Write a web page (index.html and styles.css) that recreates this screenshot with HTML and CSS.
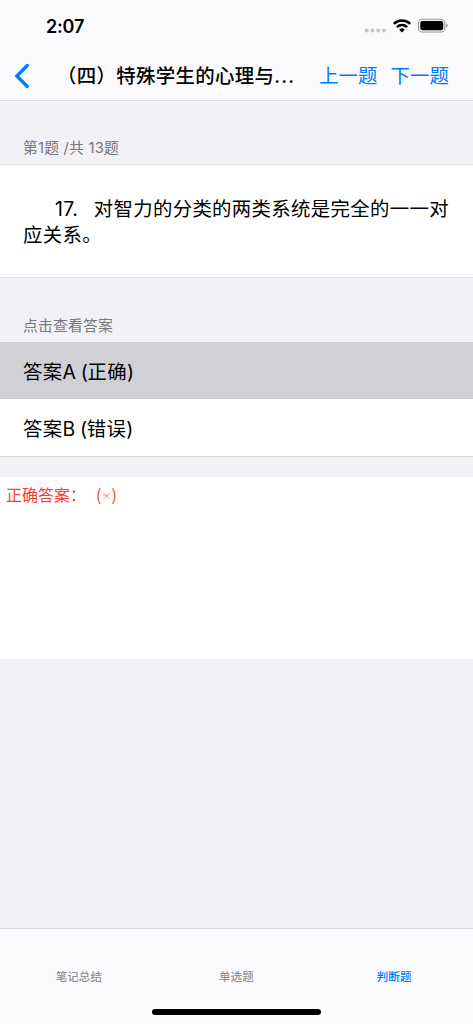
FILE: index.html
```html
<!DOCTYPE html>
<html lang="zh-CN">
<head>
<meta charset="utf-8">
<title>判断题</title>
<link rel="stylesheet" href="styles.css">
</head>
<body>
<div class="app">
  <header class="top">
    <div class="status">
      <span class="time">2:07</span>
      <svg class="indicators" width="84" height="16" viewBox="0 0 84 16">
        <g fill="#c7c7ca"><circle cx="2.6" cy="12.5" r="2"/><circle cx="8.4" cy="12.5" r="2"/><circle cx="14.2" cy="12.5" r="2"/><circle cx="20" cy="12.5" r="2"/></g>
        <g fill="none" stroke="#000" stroke-width="2.5"><path d="M29.8 5.8a11.6 11.6 0 0 1 16.4 0"/><path d="M32.9 9.2a7.2 7.2 0 0 1 10.2 0"/></g>
        <path d="M35.2 11.7a4 4 0 0 1 5.6 0L38 14.5z"/>
        <rect x="54.6" y="1.2" width="26.3" height="12.8" rx="3.8" fill="none" stroke="#98989a" stroke-width="1.1"/>
        <rect x="56.3" y="2.9" width="22.9" height="9.4" rx="2.1"/>
        <path d="M82.1 5.5c2 .7 2 3.5 0 4.2z" fill="#98989a"/>
      </svg>
    </div>
    <nav class="navbar">
      <svg class="back" width="16" height="26" viewBox="0 0 16 26"><path d="M13.3 2.5 2.8 13l10.5 10.5" fill="none" stroke="#007aff" stroke-width="3.2" stroke-linecap="round" stroke-linejoin="miter"/></svg>
      <h1 class="title">（四）特殊学生的心理与<span class="dots">...</span></h1>
      <a class="link">上一题</a>
      <a class="link">下一题</a>
    </nav>
  </header>
  <main class="content">
    <div class="label label-count">第1题 /共 13题</div>
    <section class="question"><p>17. 对智力的分类的两类系统是完全的一一对应关系。</p></section>
    <div class="label label-hint">点击查看答案</div>
    <div class="options">
      <div class="option selected">答案<span class="latin">A (</span>正确<span class="latin">)</span></div>
      <div class="option">答案<span class="latin">B (</span>错误<span class="latin">)</span></div>
    </div>
    <section class="answer"><span>正确答案：</span><span class="mark">(<span class="cross">×</span>)</span></section>
  </main>
  <footer class="tabs">
    <div class="tab-row"><span>笔记总结</span><span>单选题</span><span class="active">判断题</span></div>
    <div class="home"></div>
  </footer>
</div>
</body>
</html>
```
FILE: styles.css
```css
* { box-sizing: border-box; }
body { margin: 0; }
.app {
  width: 473px;
  height: 1024px;
  display: flex;
  flex-direction: column;
  background: #f2f1f6;
  color: #000;
  font-family: Inter, "Noto Sans CJK SC", sans-serif;
  font-size: 19.4px;
  letter-spacing: .35px;
  white-space: nowrap;
  overflow: hidden;
}
.top {
  height: 101px;
  background: #fbfbfd;
  border-bottom: 1px solid #dcdce0;
}
.status {
  height: 51px;
  padding: 18px 25px 0 46px;
  display: flex;
  justify-content: space-between;
}
.time { font-size: 18px; line-height: 18px; font-weight: 600; letter-spacing: -.2px; }
.navbar {
  height: 50px;
  padding: 0 24px 0 14px;
  display: flex;
  align-items: center;
}
.back { margin-right: 27px; }
.title { margin: 0 auto 0 0; font-size: 19.4px; line-height: 28px; font-weight: 500; }
.dots { letter-spacing: 1.2px; }
.link { color: #007aff; line-height: 28px; margin-left: 13px; letter-spacing: .1px; }
.content { flex: 1; }
.label { color: #77777c; font-size: 14.8px; line-height: 20px; padding-left: 23px; letter-spacing: .2px; }
.label-count { height: 63px; padding-top: 37px; }
.label-hint { height: 64px; padding-top: 38px; }
.question {
  height: 114px;
  padding: 32px 23px 0;
  background: #fff;
  border: solid #e1e1e5;
  border-width: 1px 0;
}
.question p {
  margin: 0;
  width: 430px;
  line-height: 25.5px;
  text-indent: 32px;
  word-spacing: 9.8px;
  white-space: normal;
}
.options { background: #fff; border-bottom: 1px solid #dcdce0; }
.option { height: 57px; line-height: 60px; padding-left: 23px; }
.latin { letter-spacing: -.3px; }
.selected { background: #d1d0d5; }
.answer {
  height: 182px;
  margin-top: 20px;
  padding: 7px 6px;
  display: flex;
  background: #fff;
  color: #ff3b30;
  font-size: 16px;
  line-height: 22px;
  letter-spacing: 0;
}
.mark { margin-left: 10px; font-family: "Noto Sans CJK SC", sans-serif; line-height: 20px; }
.cross { font-size: 10px; font-weight: 300; vertical-align: 1.5px; line-height: 1; }
.tabs {
  height: 96px;
  background: #fbfbfd;
  border-top: 1px solid #d5d4da;
}
.tab-row {
  height: 80px;
  padding-top: 38px;
  display: grid;
  grid-template-columns: repeat(3, 1fr);
  text-align: center;
  color: #929296;
  font-size: 11.5px;
  line-height: 20px;
  font-weight: 500;
  letter-spacing: .1px;
}
.active { color: #007aff; }
.home { width: 169px; height: 6px; margin: 0 auto; border-radius: 3px; background: #000; }
```
